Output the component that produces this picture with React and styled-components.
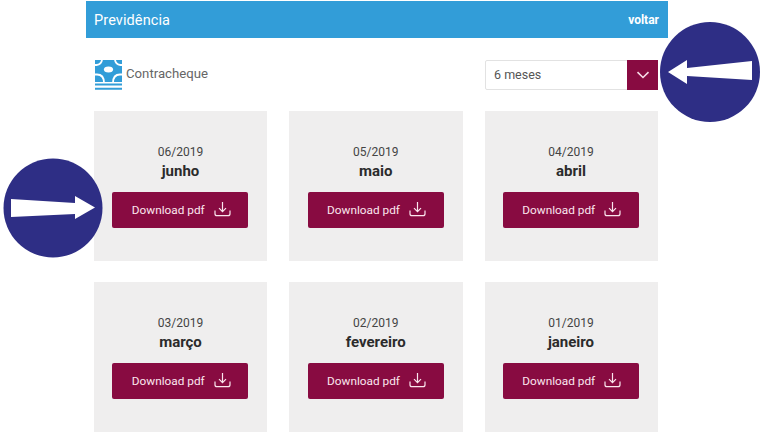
import React from "react";
import styled, { createGlobalStyle } from "styled-components";

const Global = createGlobalStyle`
  html, body { margin: 0; padding: 0; background: #fff; }
  body { font-family: Roboto, "Liberation Sans", sans-serif; width: 763px; height: 442px; overflow: hidden; }
`;
const Page = styled.div`
  position: relative;
  width: 763px;
  height: 442px;
  padding: 1px 0 0 86px;
  box-sizing: border-box;
`;
const Main = styled.main`
  width: 582px;
`;
const Header = styled.header`
  height: 37px;
  background: #329dd8;
  display: flex;
  align-items: center;
  justify-content: space-between;
  padding: 0 9px 0 8px;
  color: #fff;
`;
const Title = styled.h1`
  margin: 2px 0 0;
  font-size: 14.5px;
  font-weight: 400;
  letter-spacing: 0.1px;
`;
const Back = styled.a`
  font-size: 12px;
  font-weight: 700;
`;
const Toolbar = styled.div`
  display: flex;
  align-items: center;
  justify-content: space-between;
  height: 30px;
  margin-top: 22px;
  padding: 0 10px 0 9px;
`;
const Brand = styled.div`
  display: flex;
  align-items: center;
  gap: 4px;
  font-size: 13.2px;
  color: #666;
`;
const BrandLabel = styled.span`
  margin-top: -3px;
`;
const Select = styled.div`
  width: 173px;
  height: 30px;
  box-sizing: border-box;
  display: flex;
  justify-content: space-between;
  align-items: center;
  border: 1px solid #e2e2e2;
  border-radius: 2px;
  font-size: 12.5px;
  color: #555;
  padding-left: 8px;
`;
const SelectValue = styled.span`
  margin-top: -2px;
`;
const Caret = styled.span`
  width: 31px;
  height: 30px;
  margin-right: -1px;
  background: #880b41;
  display: flex;
  align-items: center;
  justify-content: center;
`;
const Grid = styled.div`
  display: grid;
  grid-template-columns: 173px 173.5px 173px;
  column-gap: 22px;
  row-gap: 21px;
  padding: 21px 0 0 8px;
`;
const Card = styled.article`
  height: 150px;
  background: #efeeee;
  display: flex;
  flex-direction: column;
  align-items: center;
  padding-top: 34px;
  box-sizing: border-box;
`;
const DateText = styled.div`
  font-size: 12px;
  line-height: 15px;
  color: #444;
`;
const Month = styled.div`
  font-size: 15px;
  line-height: 19px;
  margin-top: 2px;
  font-weight: 700;
  color: #2b2b2b;
  margin-bottom: 11px;
`;
const Button = styled.button`
  width: 136px;
  height: 36px;
  margin-right: 0.5px;
  border: 0;
  border-radius: 2px;
  background: #880b41;
  color: #fbe6ee;
  font-family: inherit;
  font-size: 11.8px;
  display: flex;
  align-items: center;
  justify-content: center;
  gap: 9px;
  padding: 0 0 0 2px;
`;
const IconSvg = styled.svg`
  margin-top: -3px;
`;
const Marker = styled.svg`
  position: absolute;
  top: ${(p) => p.$top}px;
  left: ${(p) => p.$left}px;
`;

const Logo = () => (
  <svg width="27" height="30" viewBox="0 0 27 30">
    <rect width="27" height="22" fill="#329dd8" />
    <g fill="none" stroke="#fff" strokeWidth="1.8">
      <path d="M7 -1C7 2.5 5 4.5 1.5 5L-1 5" />
      <path d="M20 -1C20 2.5 22 4.5 25.5 5L28 5" />
      <path d="M-1 14.5H2C6 14.5 9 17 9 23" />
      <path d="M28 14.5H25C21 14.5 18 17 18 23" />
    </g>
    <ellipse cx="13.5" cy="9.5" rx="4.6" ry="3" fill="#fff" />
    <path fill="#329dd8" d="M0 23.5h27v2H0zM0 27.8h27v2H0z" />
  </svg>
);
const Chevron = () => (
  <svg width="14" height="8" viewBox="0 0 14 8" fill="none" stroke="#f6dbe6" strokeWidth="1.6">
    <path d="M1.5 1.2 7 6.5l5.5-5.3" />
  </svg>
);
const DownloadIcon = () => (
  <IconSvg width="17" height="16" viewBox="0 0 17 16" fill="none" stroke="#fbe6ee" strokeWidth="1.2">
    <path d="M8.5 1v9.5M5 7.2l3.5 3.5L12 7.2" />
    <path d="M1 9.5v3.2c0 1.2.8 2 2 2h11c1.2 0 2-.8 2-2V9.5" />
  </IconSvg>
);

const items = [
  ["06/2019", "junho"],
  ["05/2019", "maio"],
  ["04/2019", "abril"],
  ["03/2019", "março"],
  ["02/2019", "fevereiro"],
  ["01/2019", "janeiro"],
];

export default function App() {
  return (
    <Page>
      <Global />
      <Main>
        <Header>
          <Title>Previdência</Title>
          <Back>voltar</Back>
        </Header>
        <Toolbar>
          <Brand>
            <Logo />
            <BrandLabel>Contracheque</BrandLabel>
          </Brand>
          <Select>
            <SelectValue>6 meses</SelectValue>
            <Caret>
              <Chevron />
            </Caret>
          </Select>
        </Toolbar>
        <Grid>
          {items.map(([d, m]) => (
            <Card key={d}>
              <DateText>{d}</DateText>
              <Month>{m}</Month>
              <Button>
                Download pdf
                <DownloadIcon />
              </Button>
            </Card>
          ))}
        </Grid>
      </Main>
      <Marker $top={22} $left={660} width="100" height="100" viewBox="0 0 100 100">
        <circle cx="50" cy="50" r="50" fill="#2e2e85" />
        <path fill="#fff" d="M8 50 27 38v8l65-7v19l-65-4v8z" />
      </Marker>
      <Marker $top={158} $left={3} width="100" height="100" viewBox="0 0 100 100">
        <circle cx="50" cy="50" r="49.5" fill="#2e2e85" />
        <path fill="#fff" d="M8 41l64 4v-7l20 11.500-20 11.500v-5L8 59z" />
      </Marker>
    </Page>
  );
}
